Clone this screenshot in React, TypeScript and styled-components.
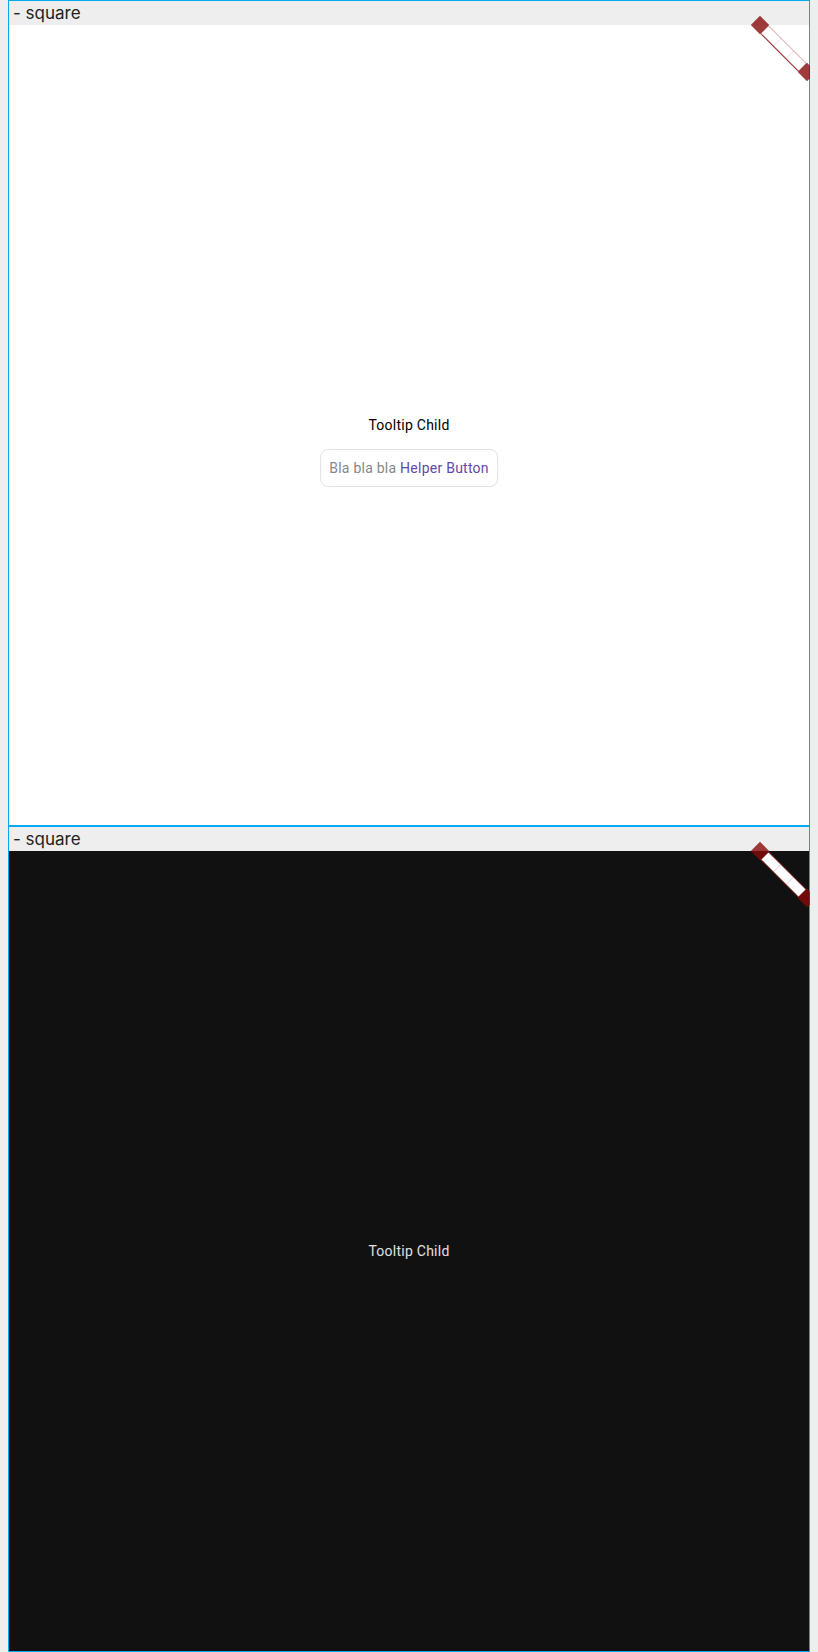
import React from 'react';
import styled, { createGlobalStyle } from 'styled-components';

const GlobalStyle = createGlobalStyle`
  html, body {
    margin: 0;
    padding: 0;
  }
  body {
    margin: 0 8px;
    background: #eeeeee;
    font-family: Roboto, 'Liberation Sans', sans-serif;
  }
`;

const Stack = styled.div`
  display: flex;
  flex-direction: column;
  width: 802px;
`;

const Frame = styled.section`
  position: relative;
  box-sizing: border-box;
  width: 802px;
  border: 1px solid #03a9f4;
  display: flex;
  flex-direction: column;
`;

const Label = styled.div`
  height: 24px;
  line-height: 24px;
  padding-left: 4px;
  background: #eeeeee;
  color: #222222;
  font-family: Inter, 'Liberation Sans', sans-serif;
  font-size: 17px;
`;

const Canvas = styled.div<{ $dark?: boolean }>`
  width: 800px;
  height: 800px;
  display: flex;
  align-items: center;
  justify-content: center;
  background: ${(p) => (p.$dark ? '#111111' : '#ffffff')};
`;

const Anchor = styled.div`
  position: relative;
`;

const Child = styled.span<{ $dark?: boolean }>`
  display: block;
  font-size: 14px;
  line-height: 20px;
  letter-spacing: 0.25px;
  color: ${(p) => (p.$dark ? '#e0e0e0' : '#000000')};
`;

const Tooltip = styled.div`
  position: absolute;
  top: calc(100% + 14px);
  left: 50%;
  transform: translateX(-50%);
  box-sizing: border-box;
  padding: 8px;
  white-space: nowrap;
  background: #ffffff;
  border: 1px solid #e2e2e6;
  border-radius: 8px;
  font-size: 14px;
  line-height: 20px;
  letter-spacing: 0.25px;
`;

const Muted = styled.span`
  color: #86868b;
`;

const HelperButton = styled.span`
  color: #6247aa;
  cursor: pointer;
`;

const Handle = styled.svg`
  position: absolute;
  left: 735px;
  top: 8px;
  overflow: visible;
  pointer-events: none;
`;

// diagonal resize grip sitting over the top-right corner of each frame
const ResizeHandle: React.FC<{ dark?: boolean }> = ({ dark }) => {
  const end = 'rgba(135, 10, 10, 0.8)';
  const edge = dark ? '#6a1414' : 'rgba(160, 40, 40, 0.35)';
  const len = 47 * Math.SQRT2;
  const half = 6.5;
  return (
    <Handle width='73' height='75' viewBox='0 0 73 75'>
      <g transform='rotate(45 16 16)'>
        <rect x={16 + half} y='10.5' width={len - half * 2} height='11' fill='#ffffff' stroke={edge} strokeWidth='1' />
        {[1, 2].map((i) => (
          <line
            key={i}
            x1={16 + half + ((len - half * 2) / 3) * i}
            y1='10.5'
            x2={16 + half + ((len - half * 2) / 3) * i}
            y2='21.5'
            stroke={dark ? 'rgba(120,20,20,0.15)' : 'rgba(180,80,80,0.15)'}
            strokeWidth='1'
          />
        ))}
        {!dark && <line x1={16 + half} y1='21.5' x2={16 + len - half} y2='21.5' stroke='#9c3b3b' strokeWidth='1' />}
        <rect x={16 - half} y={16 - half} width={half * 2} height={half * 2} fill={end} />
        <rect x={16 + len - half} y={16 - half} width={half * 2} height={half * 2} fill={end} />
      </g>
    </Handle>
  );
};

const App: React.FC = () => (
  <>
    <GlobalStyle />
    <Stack>
      <Frame>
        <Label>- square</Label>
        <Canvas>
          <Anchor>
            <Child>Tooltip Child</Child>
            <Tooltip>
              <Muted>Bla bla bla </Muted>
              <HelperButton>Helper Button</HelperButton>
            </Tooltip>
          </Anchor>
        </Canvas>
        <ResizeHandle />
      </Frame>
      <Frame>
        <Label>- square</Label>
        <Canvas $dark>
          <Anchor>
            <Child $dark>Tooltip Child</Child>
          </Anchor>
        </Canvas>
        <ResizeHandle dark />
      </Frame>
    </Stack>
  </>
);

export default App;
